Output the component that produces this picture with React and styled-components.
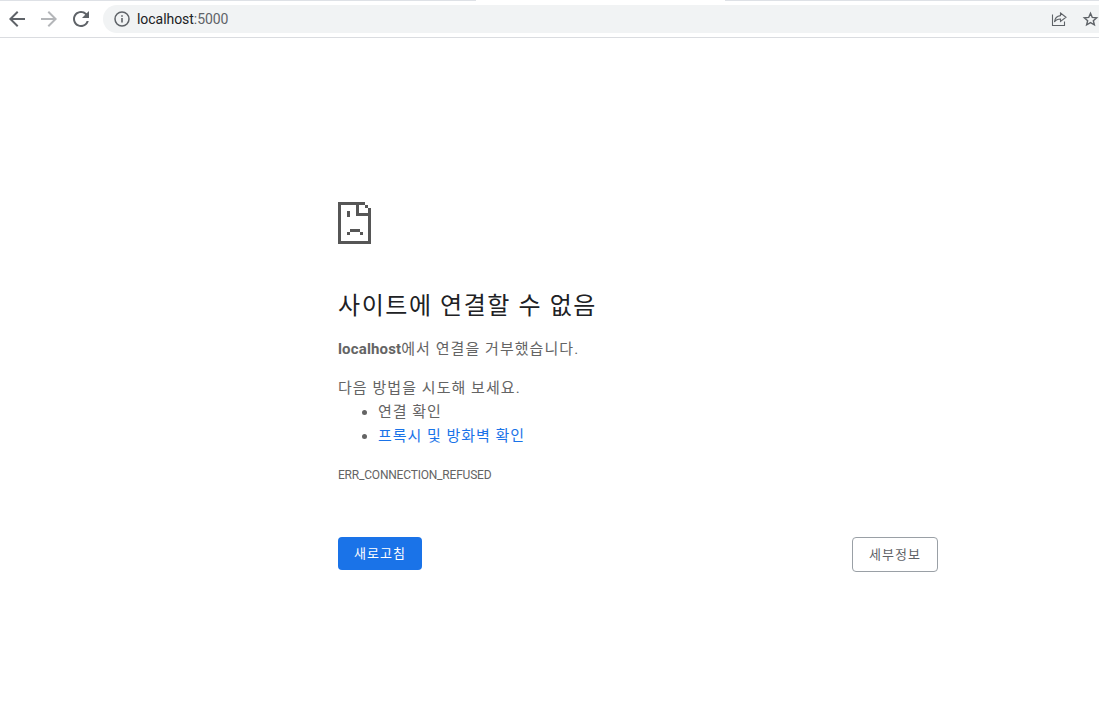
import React from 'react';
import styled, { createGlobalStyle } from 'styled-components';

const GlobalStyle = createGlobalStyle`
  html, body {
    margin: 0;
    padding: 0;
    background: #fff;
  }
  body {
    font-family: Roboto, "Noto Sans CJK KR", sans-serif;
    font-size: 15px;
    color: #646464;
  }
`;

const Page = styled.div`
  width: 1099px;
  height: 718px;
  overflow: hidden;
`;

// the 1px that is left of the tab strip above the toolbar
const TabEdge = styled.div`
  display: flex;
  height: 1px;
  background: #dee1e6;
`;

const ActiveTab = styled.div`
  width: 249px;
  margin-left: 476px;
  background: #fff;
`;

const Toolbar = styled.header`
  display: flex;
  align-items: center;
  height: 36px;
  padding: 0 0 0 5px;
  background: #fff;
  border-bottom: 1px solid #dadce0;
`;

const NavButton = styled.button`
  display: flex;
  align-items: center;
  justify-content: center;
  width: 24px;
  height: 24px;
  margin-right: 8px;
  padding: 0;
  border: none;
  background: none;
  color: ${props => (props.disabled ? '#b4b6b9' : '#5f6368')};
`;

const AddressBar = styled.div`
  flex: 1;
  display: flex;
  align-items: center;
  height: 28px;
  margin-left: 2px;
  padding-left: 11px;
  background: #f1f3f4;
  border-radius: 14px 0 0 14px;
`;

const Url = styled.span`
  margin-left: 7px;
  flex: 1;
  font-size: 14px;
  letter-spacing: -0.05px;
  color: #202124;
  span {
    color: #5f6368;
  }
`;

const BarIcon = styled.span`
  display: flex;
  margin-right: ${props => props.$gap}px;
  color: #5f6368;
`;

const Main = styled.main`
  width: 600px;
  margin-left: 338px;
  padding-top: 164px;
`;

const SadPage = styled.svg`
  display: block;
  width: 33px;
  height: 42px;
`;

const Heading = styled.h1`
  margin: 45px 0 0;
  font-size: 24px;
  font-weight: 400;
  line-height: 34px;
  letter-spacing: 0.065em;
  color: #202124;
`;

const Paragraph = styled.p`
  margin: ${props => props.$top}px 0 0;
  line-height: 24px;
  font-size: 15px;
  letter-spacing: 0.07em;

  strong {
    letter-spacing: 0.01em;
  }
`;

const Suggestions = styled.ul`
  margin: 0;
  padding-left: 40px;
  line-height: 24px;
  letter-spacing: 0.065em;
`;

const SuggestionLink = styled.a`
  color: #1a73e8;
  text-decoration: none;
`;

const ErrorCode = styled.div`
  margin-top: 19px;
  font-size: 12px;
  line-height: 16px;
  letter-spacing: -0.2px;
  color: #646464;
`;

const Actions = styled.div`
  display: flex;
  justify-content: space-between;
  align-items: flex-start;
  margin-top: 54px;
`;

const ReloadButton = styled.button`
  width: 84px;
  height: 33px;
  padding: 0 0 2px;
  border: none;
  border-radius: 4px;
  background: #1a73e8;
  color: #fff;
  font-family: inherit;
  font-size: 13px;
  letter-spacing: 1px;
`;

const DetailsButton = styled.button`
  width: 86px;
  height: 35px;
  padding: 0 0 2px;
  border: 1px solid #9aa0a6;
  border-radius: 4px;
  background: #fff;
  color: #5f6368;
  font-family: inherit;
  font-size: 13px;
  letter-spacing: 1px;
`;

const iconProps = {
  width: 24,
  height: 24,
  viewBox: '0 0 24 24',
  fill: 'currentColor',
};

function App() {
  return (
    <Page>
      <GlobalStyle />
      <TabEdge>
        <ActiveTab />
      </TabEdge>
      <Toolbar>
        <NavButton aria-label="뒤로">
          <svg {...iconProps}>
            <path d="M20 11H7.830l5.590-5.590L12 4l-8 8 8 8 1.410-1.410L7.830 13H20v-2z" />
          </svg>
        </NavButton>
        <NavButton disabled aria-label="앞으로">
          <svg {...iconProps}>
            <path d="M4 11h12.170l-5.590-5.590L12 4l8 8-8 8-1.410-1.410L16.170 13H4v-2z" />
          </svg>
        </NavButton>
        <NavButton aria-label="새로고침">
          <svg {...iconProps}>
            <path d="M17.650 6.350A7.958 7.958 0 0 0 12 4c-4.420 0-7.990 3.580-7.990 8s3.570 8 7.990 8c3.730 0 6.840-2.550 7.730-6h-2.080A5.990 5.990 0 0 1 12 18c-3.310 0-6-2.690-6-6s2.690-6 6-6c1.660 0 3.140.690 4.220 1.780L13 11h7V4l-2.350 2.350z" />
          </svg>
        </NavButton>
        <AddressBar>
          <svg width="16" height="16" viewBox="0 0 16 16" fill="none" stroke="#5f6368">
            <circle cx="8" cy="8" r="7" strokeWidth="1.5" />
            <path d="M8 7v4.500M8 4.300v1.500" strokeWidth="1.6" />
          </svg>
          <Url>
            localhost<span>:5000</span>
          </Url>
          <BarIcon $gap={14}>
            <svg width="18" height="18" viewBox="0 0 18 18" fill="none" stroke="currentColor" strokeWidth="1.1">
              <path d="M2.500 4.500v11h12v-4" />
              <path d="M10.500 3l5.500 4.200-5.500 4.200V9c-2.600 0-4.600.8-6 3 .3-3.400 2.400-6 6-6.400z" />
            </svg>
          </BarIcon>
          <BarIcon $gap={0}>
            <svg width="17" height="17" viewBox="0 0 18 18" fill="none" stroke="currentColor" strokeWidth="1.5">
              <path d="M9 2.500l1.900 4.300 4.600.4-3.500 3 1.100 4.500L9 12.300l-4.100 2.400 1.100-4.500-3.500-3 4.600-.4z" />
            </svg>
          </BarIcon>
        </AddressBar>
      </Toolbar>
      <Main>
        <SadPage viewBox="0 0 33 42" shapeRendering="crispEdges" fill="#565656">
          <rect x="0" y="0" width="27" height="3" />
          <rect x="0" y="0" width="3" height="42" />
          <rect x="0" y="39" width="33" height="3" />
          <rect x="30" y="6" width="3" height="36" />
          <rect x="27" y="3" width="3" height="3" />
          <rect x="18" y="3" width="3" height="11" />
          <rect x="18" y="11" width="15" height="3" />
          <rect x="9" y="9" width="3" height="6" />
          <rect x="12" y="27" width="10" height="3" />
          <rect x="9" y="30" width="3" height="3" />
          <rect x="22" y="30" width="3" height="3" />
        </SadPage>
        <Heading>사이트에 연결할 수 없음</Heading>
        <Paragraph $top={14}>
          <strong>localhost</strong>에서 연결을 거부했습니다.
        </Paragraph>
        <Paragraph $top={15}>다음 방법을 시도해 보세요.</Paragraph>
        <Suggestions>
          <li>연결 확인</li>
          <li>
            <SuggestionLink href="#">프록시 및 방화벽 확인</SuggestionLink>
          </li>
        </Suggestions>
        <ErrorCode>ERR_CONNECTION_REFUSED</ErrorCode>
        <Actions>
          <ReloadButton>새로고침</ReloadButton>
          <DetailsButton>세부정보</DetailsButton>
        </Actions>
      </Main>
    </Page>
  );
}

export default App;
